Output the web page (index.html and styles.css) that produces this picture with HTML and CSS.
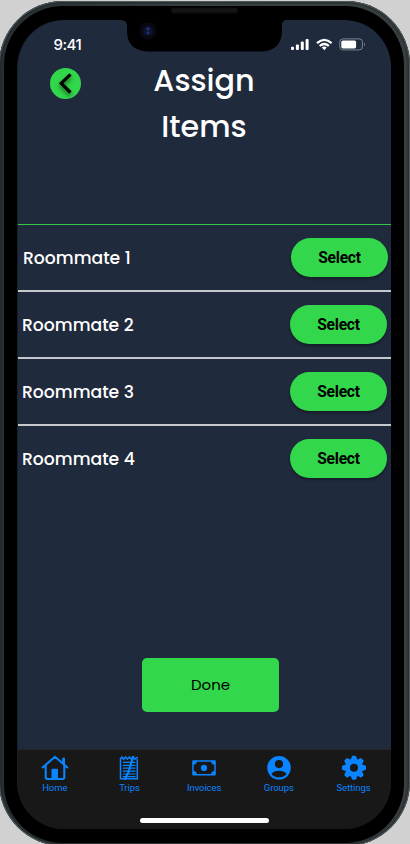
FILE: index.html
```html
<!DOCTYPE html>
<html lang="en">
<head>
<meta charset="utf-8">
<title>Assign Items</title>
<link rel="stylesheet" href="styles.css">
</head>
<body>
<div class="phone">
  <div class="bezel">
    <main class="screen">
      <header class="status">
        <span class="time">9:41</span>
        <svg class="signals" width="74" height="14" viewBox="0 0 74 14" fill="#fff">
          <rect x="0" y="8.7" width="3" height="3.3" rx="1"/><rect x="4.9" y="6.6" width="3" height="5.4" rx="1"/><rect x="9.8" y="3.5" width="3" height="8.5" rx="1"/><rect x="14.6" y="1" width="3" height="11" rx="1"/>
          <g fill="none" stroke="#fff" stroke-width="2.3"><path d="M26 5.1Q33.3-1.4 40.6 5.1"/><path d="M28.7 8Q33.3 4 37.9 8"/></g>
          <path d="M30.8 9.6Q33.3 7.6 35.8 9.6L33.3 12.2Z"/>
          <rect x="48.8" y=".9" width="22.6" height="11" rx="3" fill="none" stroke="#7d8490"/>
          <rect x="50.3" y="2.4" width="14.8" height="8" rx="1.6"/><path d="M73 4.7Q75 6.4 73 8.1Z" fill="#7d8490"/>
        </svg>
      </header>
      <div class="heading">
        <button class="back" aria-label="Back"><svg width="31" height="31" viewBox="0 0 31 31"><path d="M20.5 6.3L11.2 15.3L20.5 24.5" fill="none" stroke="#000" stroke-width="3.2"/></svg></button>
        <h1>Assign<br>Items</h1>
      </div>
      <ul class="people">
        <li class="first"><span>Roommate 1</span><button>Select</button></li>
        <li><span>Roommate 2</span><button>Select</button></li>
        <li><span>Roommate 3</span><button>Select</button></li>
        <li><span>Roommate 4</span><button>Select</button></li>
      </ul>
      <button class="done">Done</button>
      <nav class="tabs">
        <div class="tab"><svg viewBox="0 0 28 26"><path d="M1 13L14 1.8L27 13M4.7 10.5V22.3Q4.7 24 6.4 24H21.6Q23.3 24 23.3 22.3V10.5" fill="none" stroke="#0a84ff" stroke-width="2.1"/><path d="M10.5 24V14.7Q10.5 13.7 11.5 13.7H16Q17 13.7 17 14.7V24ZM21.2 2.8H24V11L21.2 8.5Z"/></svg><span>Home</span></div>
        <div class="tab"><svg viewBox="0 0 28 26"><g fill="none" stroke="#0a84ff"><path d="M5.5 4V23.8H22.3V4" stroke-width="1.5"/><path d="M5 4.3L7 2L8.6 4.2L10.6 2L12.4 4.2L14.4 2L16.2 4.2L18.2 2L20 4.2L22.8 2" stroke-width="1.5"/><path d="M8 7.4H20.5M8 10.3H20.5M8 13.2H20.5M8 16.1H20.5M8 19H20.5M8 21.6H20.5" stroke-width="1.2"/><path d="M18.4 1L13.3 17.5L9.7 24.8" stroke-width="2.2"/></g></svg><span>Trips</span></div>
        <div class="tab"><svg viewBox="0 0 28 26"><path fill-rule="evenodd" d="M3.2 5.3H24.8Q25.8 5.3 25.8 6.3V19.5Q25.8 20.5 24.8 20.5H3.2Q2.2 20.5 2.2 19.5V6.3Q2.2 5.3 3.2 5.3ZM6.8 6.7Q6.6 9.5 3.7 9.7V16.1Q6.6 16.4 6.8 19.1H21.2Q21.4 16.4 24.3 16.1V9.7Q21.4 9.5 21.2 6.7Z"/><circle cx="14" cy="12.9" r="3.1"/></svg><span>Invoices</span></div>
        <div class="tab"><svg viewBox="0 0 28 26"><path fill-rule="evenodd" d="M14 1a11.8 11.8 0 1 0 0 23.6a11.8 11.8 0 1 0 0-23.6ZM14 5a4.1 4.1 0 1 1 0 8.2a4.1 4.1 0 1 1 0-8.2ZM6.4 18.9Q9 15.7 14 15.7T21.6 18.9Q18.8 22.3 14 22.3T6.4 18.9Z"/></svg><span>Groups</span></div>
        <div class="tab"><svg viewBox="0 0 28 26"><g transform="translate(14 12.8)"><path fill-rule="evenodd" d="M0-9A9 9 0 1 1 0 9A9 9 0 1 1 0-9ZM0-4A4 4 0 1 0 0 4A4 4 0 1 0 0-4Z"/><path id="tooth" d="M-3.4-7.5L-2.2-11.2Q-2-12-1.2-12H1.2Q2-12 2.2-11.2L3.4-7.5Z"/><use href="#tooth" transform="rotate(45)"/><use href="#tooth" transform="rotate(90)"/><use href="#tooth" transform="rotate(135)"/><use href="#tooth" transform="rotate(180)"/><use href="#tooth" transform="rotate(225)"/><use href="#tooth" transform="rotate(270)"/><use href="#tooth" transform="rotate(315)"/></g></svg><span>Settings</span></div>
        <div class="home-bar"></div>
      </nav>
    </main>
    <svg class="notch" width="173" height="52" viewBox="0 0 173 52"><path d="M0 0H173V20H168.5Q164.2 20 164 25V30Q164 51.5 142 51.5H30Q9 50.5 9 31V26Q9 20 3 20H0Z"/><rect x="53" y="8" width="67" height="5" rx="2.5" fill="#141414" stroke="#0a0a0a"/><circle cx="30" cy="31" r="8.7" fill="#080910"/><circle cx="30" cy="31" r="4.9" fill="#0c1230"/><circle cx="30" cy="28.7" r="1.5" fill="#273b78"/><circle cx="30" cy="32.8" r="1.5" fill="#202f70"/></svg>
  </div>
</div>
</body>
</html>
```
FILE: styles.css
```css
* { box-sizing: border-box; }
html { overflow: hidden; }
body { margin: 0; height: 844px; overflow: hidden; background: #d1d1d1; font-family: Roboto, sans-serif; color: #fff; }
button { border: 0; margin: 0; padding: 0; color: #000; background: #32d74b; }
.phone { width: 411px; height: 845px; margin: 1px 0 0 -1px; padding: 5px; border-radius: 64px; background: linear-gradient(90deg, #2a3033, #3a4144 50%, #3b3f42); box-shadow: inset 0 0 0 1px #50595b, inset 0 0 3px 2px #20282a; }
.bezel { position: relative; width: 400px; height: 837px; padding: 14px 13px 14.5px; border-radius: 59px; background: #000; }
.screen { display: flex; flex-direction: column; width: 374px; height: 809px; border-left: 1px solid #161e2b; border-radius: 47px; overflow: hidden; background: #1f2a3c; }
.notch { position: absolute; left: 114px; top: -6px; clip-path: inset(6px 0 0); }
.status { display: flex; justify-content: space-between; height: 46px; padding: 16px 26px 0 35.5px; }
.time { font: 500 15px/17px Inter, sans-serif; letter-spacing: -.45px; }
.signals { margin-top: 2px; }
.heading { display: flex; height: 158px; align-items: flex-start; }
.back { width: 31px; height: 31px; margin: 2px 0 0 32px; border-radius: 50%; overflow: hidden; }
.back svg { display: block; filter: drop-shadow(0 3px 2px #0008); }
h1 { width: 246px; margin: -8px 0 0; font: 500 30.2px/46px Poppins, Inter, sans-serif; text-align: center; }
.people { margin: 0; padding: 0; list-style: none; border-top: 1px solid #32c94b; }
.people li { display: flex; align-items: center; justify-content: space-between; height: 67px; padding: 0 4px 1px 4px; border-bottom: 2px solid #c5c9ce; font: 500 17.2px/24px Poppins, Inter, sans-serif; }
.people li.first { padding: 0 3px 0 5px; }
.people li span { padding-top: 1px; }
.people li:last-child { border-color: transparent; }
.people button { width: 97px; height: 39px; border-radius: 20px; font: 700 15.6px/40px Roboto, sans-serif; letter-spacing: -.25px; box-shadow: 0 2px 3px #0005; }
.done { width: 137px; height: 54px; margin: 165px auto 0 124px; flex: none; border-radius: 5px; font: 400 15px/54px Poppins, Inter, sans-serif; }
.tabs { display: grid; grid-template-columns: repeat(5, 74.7px); align-content: start; height: 80px; margin: auto 0 0 -.6px; padding-top: 5px; background: #181818; border-top: 1px solid #252525; color: #0a84ff; }
.tab { display: flex; flex-direction: column; align-items: center; font-size: 9.5px; line-height: 12px; letter-spacing: -.1px; }
.tab svg { width: 28px; height: 26px; fill: #0a84ff; margin-bottom: 1px; }
.home-bar { grid-column: 1 / -1; justify-self: center; width: 129px; height: 5px; margin-top: 24px; border-radius: 3px; background: #fff; }
```
